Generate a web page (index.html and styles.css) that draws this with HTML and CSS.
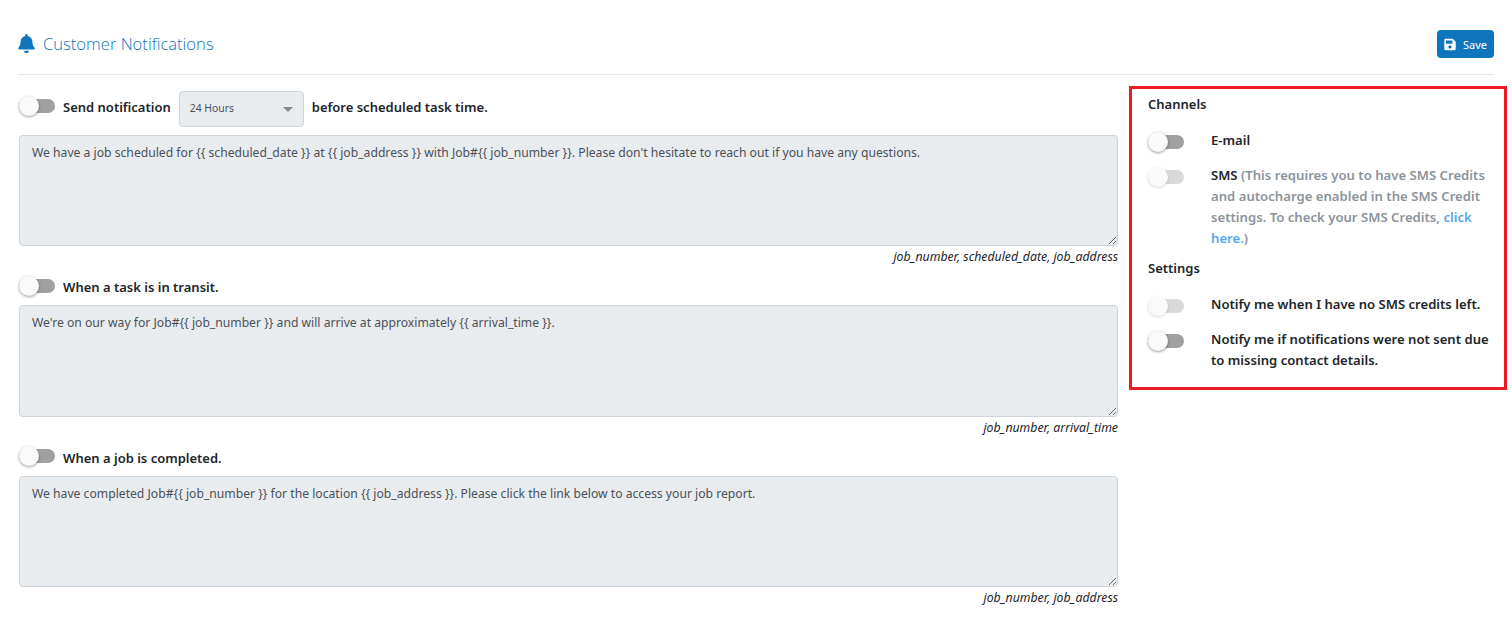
FILE: index.html
```html
<!DOCTYPE html>
<html lang="en">
<head>
    <meta charset="UTF-8">
    <meta name="viewport" content="width=device-width, initial-scale=1.0">
    <title>Customer Notifications</title>
    <link rel="stylesheet" href="styles.css">
</head>
<body>
    <div class="page">
        <div class="page-header">
            <h1 class="page-title">
                <svg class="bell" viewBox="0 0 448 512"><path fill="currentColor" d="M224 512c35.32 0 63.97-28.65 63.97-64H160.030c0 35.350 28.650 64 63.970 64zm215.390-149.710c-19.320-20.760-55.470-51.990-55.470-154.290 0-77.700-54.480-139.900-127.940-155.160V32c0-17.670-14.320-32-31.980-32s-31.980 14.330-31.980 32v20.840C118.560 68.100 64.080 130.300 64.080 208c0 102.300-36.150 133.530-55.470 154.290-6 6.450-8.660 14.160-8.610 21.710.11 16.400 12.980 32 32.100 32h383.800c19.120 0 32-15.600 32.100-32 .05-7.550-2.610-15.270-8.610-21.710z"/></svg>
                Customer Notifications
            </h1>
            <button class="btn-save" type="button">
                <svg class="save-icon" viewBox="0 0 448 512"><path fill="currentColor" d="M433.940 129.940l-83.880-83.880A48 48 0 0 0 316.120 32H48C21.490 32 0 53.490 0 80v352c0 26.510 21.490 48 48 48h352c26.510 0 48-21.490 48-48V163.880a48 48 0 0 0-14.060-33.940zM224 416c-35.350 0-64-28.650-64-64 0-35.350 28.650-64 64-64s64 28.650 64 64c0 35.350-28.650 64-64 64zm96-304.520V212c0 6.630-5.370 12-12 12H76c-6.630 0-12-5.370-12-12V108c0-6.630 5.370-12 12-12h228.520c3.180 0 6.240 1.260 8.480 3.520l3.480 3.480A12 12 0 0 1 320 111.480z"/></svg>
                Save
            </button>
        </div>

        <div class="content">
            <div class="messages">
                <div class="message">
                    <div class="message-head">
                        <span class="switch"></span>
                        <span>Send notification</span>
                        <div class="select">24 Hours<span class="caret"></span></div>
                        <span>before scheduled task time.</span>
                    </div>
                    <textarea class="message-text" readonly>We have a job scheduled for {{ scheduled_date }} at {{ job_address }} with Job#{{ job_number }}. Please don't hesitate to reach out if you have any questions.</textarea>
                    <div class="tags">job_number, scheduled_date, job_address</div>
                </div>
                <div class="message">
                    <div class="message-head">
                        <span class="switch"></span>
                        <span>When a task is in transit.</span>
                    </div>
                    <textarea class="message-text" readonly>We're on our way for Job#{{ job_number }} and will arrive at approximately {{ arrival_time }}.</textarea>
                    <div class="tags">job_number, arrival_time</div>
                </div>
                <div class="message">
                    <div class="message-head">
                        <span class="switch"></span>
                        <span>When a job is completed.</span>
                    </div>
                    <textarea class="message-text" readonly>We have completed Job#{{ job_number }} for the location {{ job_address }}. Please click the link below to access your job report.</textarea>
                    <div class="tags">job_number, job_address</div>
                </div>
            </div>

            <div class="side-panel">
                <h2 class="side-title">Channels</h2>
                <div class="option">
                    <span class="switch"></span>
                    <div class="option-text">E-mail</div>
                </div>
                <div class="option">
                    <span class="switch disabled"></span>
                    <div class="option-text">SMS <span class="muted">(This requires you to have SMS Credits and autocharge enabled in the SMS Credit settings. To check your SMS Credits, <a href="#">click here.</a>)</span></div>
                </div>
                <h2 class="side-title settings-title">Settings</h2>
                <div class="option">
                    <span class="switch disabled"></span>
                    <div class="option-text">Notify me when I have no SMS credits left.</div>
                </div>
                <div class="option">
                    <span class="switch"></span>
                    <div class="option-text">Notify me if notifications were not sent due to missing contact details.</div>
                </div>
            </div>
        </div>
    </div>
</body>
</html>
```
FILE: styles.css
```css
body {
    margin: 0;
    background: #fff;
    color: #212529;
    font-family: "Noto Sans", "Open Sans", sans-serif;
    font-size: 13px;
    line-height: 21px;
    overflow: hidden;
}

.page {
    padding: 30px 5px 0 18px;
}

.page-header {
    display: flex;
    justify-content: space-between;
    align-items: center;
    height: 28px;
    padding-bottom: 16px;
    margin-right: 13px;
    border-bottom: 1px solid #e3e6e8;
}

.page-title {
    display: flex;
    align-items: center;
    gap: 8px;
    margin: -2px 0 0;
    font-family: "Open Sans", sans-serif;
    font-size: 16.6px;
    font-weight: 300;
    color: #0f75bc;
}

.bell {
    width: 17px;
    height: 19px;
}

.btn-save {
    display: flex;
    align-items: center;
    gap: 7px;
    height: 28px;
    padding: 0 7px;
    background: #0f75bc;
    color: #fff;
    border: none;
    border-radius: 4px;
    font-family: inherit;
    font-size: 11px;
}

.save-icon {
    width: 12px;
    height: 13px;
}

.content {
    display: flex;
    align-items: flex-start;
    margin-top: 11px;
}

.messages {
    width: 1100px;
    padding-top: 1px;
}

.message {
    margin-bottom: 10px;
}

.message-head {
    display: flex;
    align-items: center;
    gap: 8px;
    margin-left: 1px;
    margin-bottom: 7px;
    font-weight: 600;
}

.switch {
    position: relative;
    display: inline-block;
    flex: none;
    width: 36px;
    height: 14px;
    border-radius: 7px;
    background: #a0a0a0;
}

.switch::after {
    content: "";
    position: absolute;
    left: 0;
    top: -3px;
    width: 20px;
    height: 20px;
    border-radius: 50%;
    background: #fafafa;
    box-shadow: 0 1px 3px rgba(0, 0, 0, 0.4);
}

.message-head .switch {
    margin-bottom: 4px;
}

.switch.disabled {
    background: #d9d9d9;
}

.switch.disabled::after {
    box-shadow: 0 1px 3px rgba(0, 0, 0, 0.15);
}

.select {
    position: relative;
    width: 113px;
    height: 34px;
    margin: 4px 0 1px;
    padding-left: 10px;
    background: #e9ecef;
    border: 1px solid #ced4da;
    border-radius: 4px;
    font-size: 10.4px;
    font-weight: 400;
    line-height: 32px;
    color: #495057;
}

.caret {
    position: absolute;
    right: 10px;
    top: 15px;
    border-left: 5px solid transparent;
    border-right: 5px solid transparent;
    border-top: 5px solid #888;
}

.message-text {
    display: block;
    box-sizing: border-box;
    width: 1099px;
    height: 111.4px;
    margin-left: 1px;
    padding: 6px 12px;
    background: #e9ecef;
    border: 1px solid #ced4da;
    border-radius: 4px;
    color: #495057;
    font-family: inherit;
    font-size: 12.16px;
    line-height: 21px;
}

.tags {
    text-align: right;
    font-size: 12.27px;
    font-style: italic;
    line-height: 21px;
}

.side-panel {
    box-sizing: border-box;
    width: 378px;
    height: 304px;
    margin-left: 11px;
    padding: 5px 14px 0 16px;
    border: 3px solid #ed1c24;
}

.side-title {
    margin: 0 0 15px;
    font-size: 13px;
    font-weight: 600;
}

.settings-title {
    margin-top: -5px;
}

.option {
    display: flex;
    margin-bottom: 14px;
    font-size: 13.1px;
    font-weight: 600;
}

.option .switch {
    margin: 5px 27px 0 0;
}

.option-text {
    flex: 1;
}

.muted {
    font-size: 13.15px;
    color: #8b939b;
}

.muted a {
    color: #55a6f0;
    text-decoration: none;
}
```
